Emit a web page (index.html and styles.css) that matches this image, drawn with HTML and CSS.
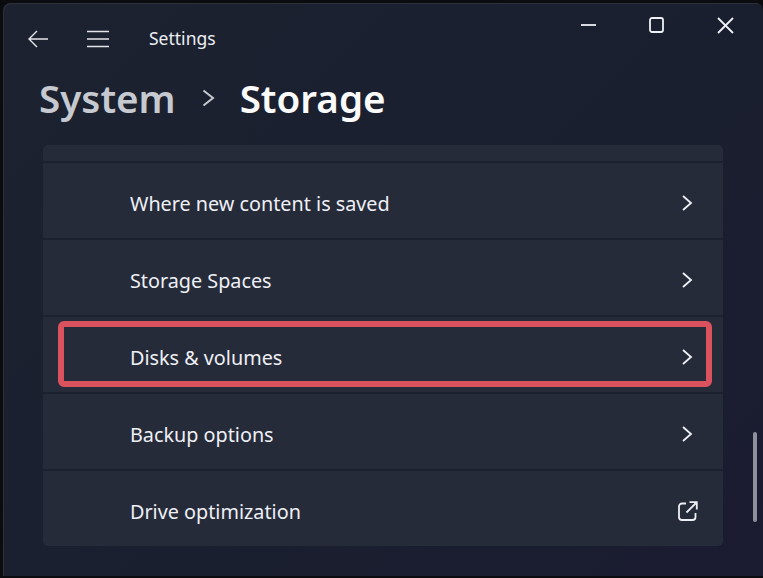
FILE: index.html
```html
<!DOCTYPE html>
<html lang="en">
<head>
    <meta charset="UTF-8">
    <meta name="viewport" content="width=device-width, initial-scale=1.0">
    <title>Settings</title>
    <link rel="stylesheet" href="styles.css">
</head>
<body>
    <div class="window">
        <div class="titlebar">
            <svg class="back-icon" width="20" height="18" viewBox="0 0 20 18"><path d="M1 9H20M9 1L1 9L9 17"/></svg>
            <svg class="menu-icon" width="22" height="18" viewBox="0 0 22 18"><path d="M0 1.500H22M0 9H22M0 16.500H22"/></svg>
            <span class="app-name">Settings</span>
            <div class="window-controls">
                <svg width="15" height="16" viewBox="0 0 15 16"><path d="M0 8H15"/></svg>
                <svg width="15" height="16" viewBox="0 0 15 16"><rect x="1" y="1" width="13" height="14" rx="2"/></svg>
                <svg width="17" height="17" viewBox="0 0 17 17"><path d="M1 1L16 16M16 1L1 16"/></svg>
            </div>
        </div>

        <div class="breadcrumb">
            <span class="crumb-parent">System</span>
            <svg class="crumb-arrow" width="14" height="20" viewBox="0 0 14 20"><path d="M2.500 2.500L12 10L2.500 17.500"/></svg>
            <span class="crumb-current">Storage</span>
        </div>

        <div class="card">
            <div class="row row-cut"></div>
            <div class="row">
                <span>Where new content is saved</span>
                <svg class="chevron" width="12" height="18" viewBox="0 0 12 18"><path d="M2 2L10 9L2 16"/></svg>
            </div>
            <div class="row">
                <span>Storage Spaces</span>
                <svg class="chevron" width="12" height="18" viewBox="0 0 12 18"><path d="M2 2L10 9L2 16"/></svg>
            </div>
            <div class="row">
                <span>Disks &amp; volumes</span>
                <svg class="chevron" width="12" height="18" viewBox="0 0 12 18"><path d="M2 2L10 9L2 16"/></svg>
                <div class="highlight"></div>
            </div>
            <div class="row">
                <span>Backup options</span>
                <svg class="chevron" width="12" height="18" viewBox="0 0 12 18"><path d="M2 2L10 9L2 16"/></svg>
            </div>
            <div class="row row-last">
                <span>Drive optimization</span>
                <svg class="external" width="20" height="20" viewBox="0 0 20 20"><path d="M8 2.500H4A3 3 0 0 0 1 5.500V16A3 3 0 0 0 4 19H14.500A3 3 0 0 0 17.500 16V12M8.500 11.500L18.500 1.500M11.500 1.200H18.800V8.500"/></svg>
            </div>
        </div>

        <div class="scrollbar"></div>
    </div>
</body>
</html>
```

FILE: styles.css
```css
* {
    box-sizing: border-box;
    margin: 0;
    padding: 0;
}

html, body {
    height: 100%;
    background: #0b0c10;
    overflow: hidden;
}

body {
    padding: 3px 0 2px 3px;
    font-family: 'Noto Sans', 'Open Sans', sans-serif;
    color: #f0f2f6;
}

svg path, svg rect {
    fill: none;
    stroke: currentColor;
}

.window {
    position: relative;
    height: 100%;
    padding: 0 0 0 40px;
    border-radius: 8px 8px 0 0;
    background: linear-gradient(135deg, #1c2230 0%, #1a1f2f 60%, #1b1b31 100%);
    box-shadow: inset 1px 1px 0 #2d3037;
}

.titlebar {
    display: flex;
    align-items: center;
    height: 72px;
    margin-left: -15px;
}

.back-icon {
    color: #e3e5ea;
    stroke-width: 1.4;
}

.menu-icon {
    margin-left: 39px;
    color: #e3e5ea;
    stroke-width: 1.6;
}

.app-name {
    margin-left: 40px;
    margin-top: -2px;
    font-size: 17.5px;
    color: #eceef2;
}

.window-controls {
    display: flex;
    align-items: center;
    gap: 53px;
    margin-left: auto;
    margin-right: 29px;
    margin-top: -28px;
    color: #eef0f4;
    stroke-width: 1.8;
}

.breadcrumb {
    display: flex;
    align-items: center;
    height: 54px;
    margin-top: -4px;
    margin-left: -4px;
    font-size: 38.6px;
    font-weight: 600;
}

.crumb-parent {
    color: #c6c9cf;
}

.crumb-arrow {
    margin-left: 25px;
    color: #c6c9cf;
    stroke-width: 2;
}

.crumb-current {
    margin-left: 25px;
    color: #fbfbfc;
}

.card {
    width: 680px;
    margin-top: 20px;
    border-radius: 5px;
    background: #262b3a;
}

.row {
    position: relative;
    display: flex;
    align-items: center;
    justify-content: space-between;
    height: 77px;
    padding: 5px 30px 0 87px;
    border-bottom: 2px solid #1c2130;
    font-size: 19.8px;
    color: #eef0f5;
}

.row-cut {
    height: 18px;
    padding-top: 0;
}

.row-last {
    height: 75px;
    border-bottom: none;
}

.chevron {
    stroke-width: 1.8;
}

.external {
    margin-right: -5px;
    stroke-width: 1.8;
}

/* red box drawn over the row */
.highlight {
    position: absolute;
    left: 15px;
    right: 11px;
    top: 4px;
    bottom: 5px;
    border: 6px solid #d9525e;
    border-radius: 6px;
}

.scrollbar {
    position: absolute;
    right: 6px;
    top: 429px;
    width: 4px;
    height: 90px;
    border-radius: 2px;
    background: #8e919c;
}
```
